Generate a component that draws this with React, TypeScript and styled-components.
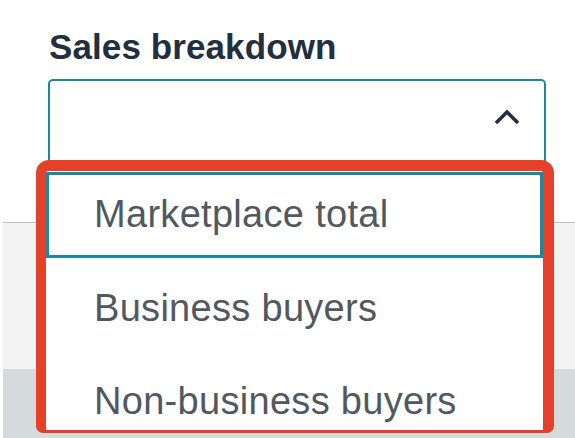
import React from "react";
import styled, { createGlobalStyle } from "styled-components";

const Global = createGlobalStyle`
  html, body { margin: 0; padding: 0; background: #ffffff; }
  body { font-family: "Liberation Sans", Arial, sans-serif; }
`;

const Page = styled.div`
  width: 575px;
  height: 438px;
  display: flex;
  flex-direction: column;
  overflow: hidden;
  background: #ffffff;
`;

const Header = styled.div`
  height: 222px;
  box-sizing: border-box;
  padding: 27px 0 0 48px;
  display: flex;
  flex-direction: column;
  align-items: flex-start;
  position: relative;
  z-index: 2;
`;

const Title = styled.h2`
  margin: 0 0 0 1px;
  font-family: "Liberation Sans", Arial, sans-serif;
  font-weight: 700;
  font-size: 35px;
  line-height: 40px;
  letter-spacing: 0.1px;
  color: #232f3e;
`;

const SelectWrap = styled.div`
  margin-top: 12px;
  width: 498px;
  position: relative;
`;

const SelectBox = styled.div`
  height: 86px;
  box-sizing: border-box;
  border: 2px solid #20879a;
  border-radius: 5px;
  background: #ffffff;
  display: flex;
  justify-content: flex-end;
  align-items: flex-start;
  padding: 28px 23px 0 0;
`;

const Menu = styled.ul`
  position: absolute;
  top: 81px;
  left: -12px;
  width: 518px;
  height: 273px;
  box-sizing: border-box;
  margin: 0;
  padding: 1px 0 0 0;
  list-style: none;
  background: #ffffff;
  border-style: solid;
  border-color: #e5402a;
  border-width: 11px 11px 3px 10px;
  border-radius: 13px 13px 7px 7px;
  overflow: hidden;
`;

const Option = styled.li<{ $selected?: boolean }>`
  box-sizing: border-box;
  height: ${(p) => (p.$selected ? "86px" : "93px")};
  border: 3px solid ${(p) => (p.$selected ? "#20879a" : "transparent")};
  padding: ${(p) => (p.$selected ? "17px" : "25px")} 0 0 45px;
  font-family: "Liberation Sans", Arial, sans-serif;
  font-size: 38px;
  line-height: 44px;
  letter-spacing: 0.3px;
  color: #52585f;
  white-space: nowrap;
`;

const LightBand = styled.div`
  height: 147px;
  box-sizing: border-box;
  margin-left: 3px;
  border-top: 1px solid #b9c2c2;
  background: #f3f3f3;
`;

const DarkBand = styled.div`
  flex: 1;
  margin-left: 3px;
  background: #d5dbdb;
`;

const Chevron = () => (
  <svg width="28" height="16" viewBox="0 0 28 16" fill="none">
    <polyline
      points="3,14 14,3 25,14"
      stroke="#232f3e"
      strokeWidth="3.6"
      strokeLinejoin="miter"
    />
  </svg>
);

const options = ["Marketplace total", "Business buyers", "Non-business buyers"];

export default function App() {
  return (
    <>
      <Global />
      <Page>
        <Header>
          <Title>Sales breakdown</Title>
          <SelectWrap>
            <SelectBox>
              <Chevron />
            </SelectBox>
            <Menu>
              {options.map((o, i) => (
                <Option key={o} $selected={i === 0}>
                  {o}
                </Option>
              ))}
            </Menu>
          </SelectWrap>
        </Header>
        <LightBand />
        <DarkBand />
      </Page>
    </>
  );
}
